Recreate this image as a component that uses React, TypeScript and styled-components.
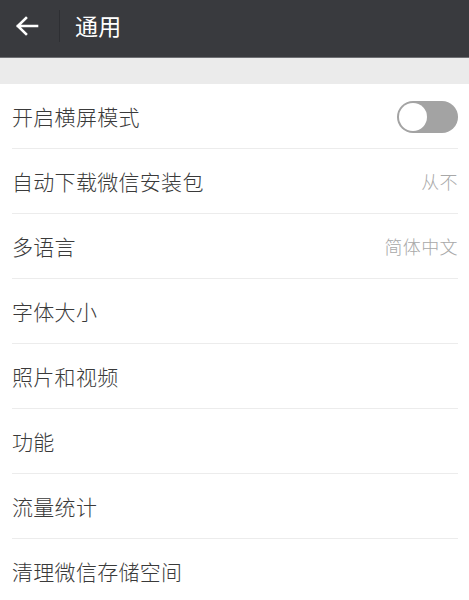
import styled, { createGlobalStyle } from "styled-components";

const GlobalStyles = createGlobalStyle`
  html, body {
    margin: 0;
    padding: 0;
    background: #ffffff;
  }

  body {
    font-family: "Noto Sans CJK SC", "Noto Sans", sans-serif;
  }
`;

const Page = styled.div`
  width: 469px;
  min-height: 600px;
  background: #ffffff;
`;

const Header = styled.header`
  display: flex;
  align-items: center;
  height: 51px;
  padding-bottom: 6px;
  background: #393a3e;
  border-bottom: 1px solid #6e6f73;
`;

const BackButton = styled.div`
  display: flex;
  align-items: center;
  justify-content: center;
  width: 50px;
  height: 51px;
  padding-left: 2px;
`;

const HeaderDivider = styled.div`
  width: 1px;
  height: 32px;
  background: #2e2f33;
  margin: 0 15px 0 7px;
`;

const Title = styled.h1`
  margin: 0;
  color: #ffffff;
  font-size: 23px;
  line-height: 1;
  font-weight: 400;
  letter-spacing: 0.3px;
`;

const Spacer = styled.div`
  height: 26px;
  background: #ebebeb;
`;

const List = styled.div`
  display: flex;
  flex-direction: column;
`;

const Row = styled.div<{ $last?: boolean }>`
  display: flex;
  align-items: center;
  justify-content: space-between;
  height: 64px;
  margin: 0 11px 0 12px;
  border-bottom: ${(p) => (p.$last ? "none" : "1px solid #ececec")};
`;

const Label = styled.span`
  color: #3a3a3a;
  font-size: 21px;
  font-weight: 300;
  letter-spacing: 0.3px;
`;

const Value = styled.span`
  color: #a8a8a8;
  font-size: 18px;
  font-weight: 300;
  letter-spacing: 0.4px;
`;

const Toggle = styled.div<{ $on?: boolean }>`
  position: relative;
  width: 61px;
  height: 32px;
  border-radius: 16px;
  background: ${(p) => (p.$on ? "#04be02" : "#a3a3a3")};
  margin-top: 1px;

  &::after {
    content: "";
    position: absolute;
    top: 2px;
    left: ${(p) => (p.$on ? "31px" : "2px")};
    width: 28px;
    height: 28px;
    border-radius: 50%;
    background: #ffffff;
  }
`;

const items: { label: string; value?: string; toggle?: boolean }[] = [
  { label: "开启横屏模式", toggle: true },
  { label: "自动下载微信安装包", value: "从不" },
  { label: "多语言", value: "简体中文" },
  { label: "字体大小" },
  { label: "照片和视频" },
  { label: "功能" },
  { label: "流量统计" },
  { label: "清理微信存储空间" },
];

const App = () => {
  return (
    <Page>
      <GlobalStyles />
      <Header>
        <BackButton>
          <svg width="24" height="20" viewBox="0 0 24 20" fill="none">
            <path
              d="M22 10H3M11 2L2.8 10L11 18"
              stroke="#ffffff"
              strokeWidth="2.6"
              strokeLinecap="square"
            />
          </svg>
        </BackButton>
        <HeaderDivider />
        <Title>通用</Title>
      </Header>
      <Spacer />
      <List>
        {items.map((item, i) => (
          <Row key={item.label} $last={i === items.length - 1}>
            <Label>{item.label}</Label>
            {item.toggle && <Toggle />}
            {item.value && <Value>{item.value}</Value>}
          </Row>
        ))}
      </List>
    </Page>
  );
};

export default App;
